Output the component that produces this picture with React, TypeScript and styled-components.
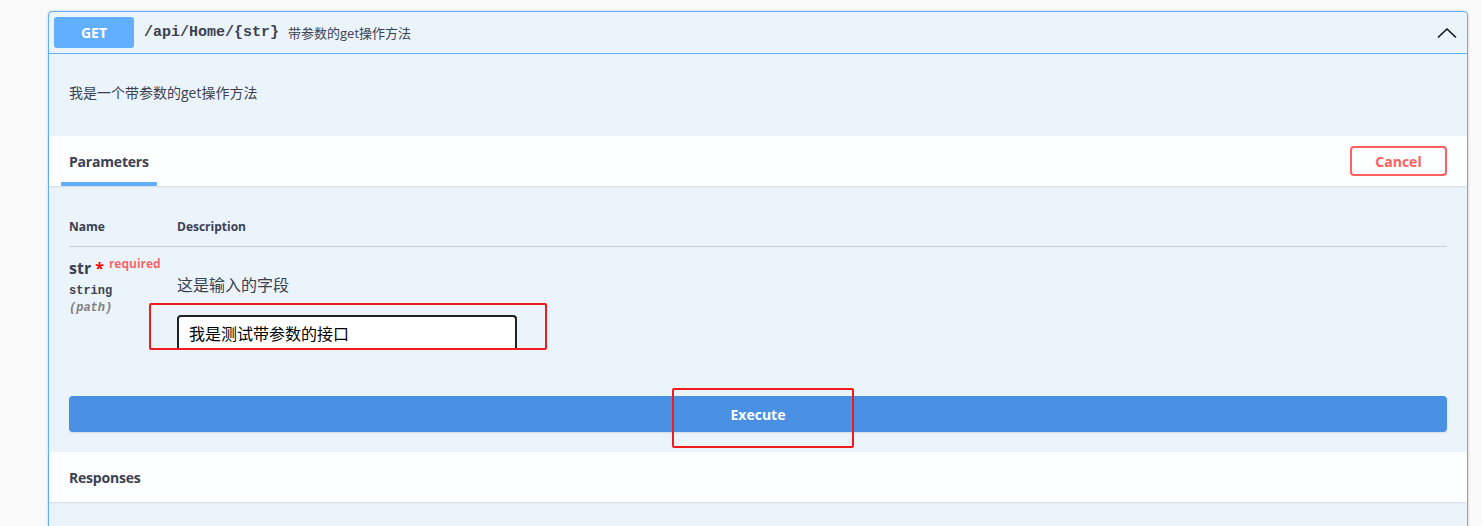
import React from "react";
import styled, { createGlobalStyle } from "styled-components";

const SANS = `"Open Sans", "Noto Sans CJK SC", sans-serif`;
const MONO = `"Liberation Mono", "Noto Sans CJK SC", monospace`;

const GlobalStyle = createGlobalStyle`
  body {
    margin: 0;
    background: #fafafa;
    font-family: ${SANS};
    color: #3b4151;
  }
`;

const Page = styled.div`
  padding: 11px 0 0 48px;
  height: 515px;
  overflow: hidden;
`;

const Card = styled.div`
  position: relative;
  width: 1418px;
  border: 1px solid #61affe;
  border-radius: 4px;
  background: #ebf3fb;
  box-shadow: 0 0 3px rgba(0, 0, 0, 0.19);
`;

const Summary = styled.div`
  display: flex;
  align-items: center;
  padding: 5px;
  border-bottom: 1px solid #61affe;
`;

const Method = styled.span`
  display: flex;
  align-items: center;
  justify-content: center;
  width: 80px;
  height: 31px;
  border-radius: 3px;
  background: #61affe;
  color: #fff;
  font-size: 14px;
  font-weight: 700;
`;

const Path = styled.span`
  margin-left: 10px;
  font-family: ${MONO};
  font-size: 15px;
  font-weight: 700;
  color: #3b4151;
`;

const SummaryText = styled.span`
  flex: 1;
  margin-left: 9px;
  font-size: 13px;
  color: #3b4151;
`;

const Chevron = styled.svg`
  width: 20px;
  height: 20px;
  margin-right: 5px;
`;

const Description = styled.div`
  padding: 28px 20px 32px;
  font-size: 14px;
  line-height: 22px;
`;

const SectionHeader = styled.div`
  display: flex;
  align-items: center;
  justify-content: space-between;
  height: 50px;
  padding: 0 20px 0 12px;
  background: rgba(255, 255, 255, 0.85);
  box-shadow: 0 1px 2px rgba(0, 0, 0, 0.1);
`;

const Tab = styled.div<{ $active?: boolean }>`
  display: flex;
  align-items: center;
  align-self: stretch;
  padding: 4px 8px 0;
  font-size: 14px;
  font-weight: 700;
  letter-spacing: -0.2px;
  color: #3b4151;
  border-bottom: 4px solid ${(p) => (p.$active ? "#61affe" : "transparent")};
`;

const CancelButton = styled.button`
  width: 97px;
  height: 30px;
  border: 2px solid #ff6060;
  border-radius: 4px;
  background: transparent;
  color: #ff6060;
  font-family: ${SANS};
  font-size: 14px;
  font-weight: 700;
`;

const ParamsBody = styled.div`
  padding: 20px 20px 27px;
`;

const TableHead = styled.div`
  display: grid;
  grid-template-columns: 108px 1fr;
  align-items: center;
  height: 40px;
  border-bottom: 1px solid rgba(59, 65, 81, 0.2);
  font-size: 12px;
  font-weight: 700;
`;

const ParamRow = styled.div`
  display: grid;
  grid-template-columns: 108px 1fr;
`;

const NameCell = styled.div`
  padding-top: 10px;
`;

const ParamName = styled.div`
  font-size: 16px;
  font-weight: 700;
  line-height: 22px;
`;

const Star = styled.span`
  color: red;
  margin-left: 4px;
`;

const Required = styled.span`
  display: inline-block;
  vertical-align: top;
  position: relative;
  top: -1px;
  margin-left: 5px;
  font-size: 12px;
  line-height: 16px;
  color: rgba(255, 0, 0, 0.6);
`;

const ParamType = styled.div`
  margin-top: 3px;
  font-family: ${MONO};
  font-size: 12px;
  font-weight: 700;
  line-height: 18px;
`;

const ParamIn = styled.div`
  font-family: ${MONO};
  font-size: 12px;
  font-style: italic;
  font-weight: 700;
  line-height: 16px;
  color: gray;
`;

const DescCell = styled.div`
  padding-top: 26px;
`;

const DescText = styled.div`
  font-size: 16px;
  line-height: 24px;
`;

const ValueInput = styled.input`
  display: block;
  box-sizing: border-box;
  width: 340px;
  height: 34px;
  margin-top: 18px;
  padding: 0 10px;
  border: 2px solid #222;
  border-bottom: none;
  border-radius: 4px 4px 0 0;
  background: #fff;
  font-family: ${SANS};
  font-size: 16px;
  color: #000;
`;

const ExecuteWrapper = styled.div`
  padding: 20px;
`;

const ExecuteButton = styled.button`
  width: 100%;
  height: 36px;
  border: none;
  border-radius: 4px;
  background: #4990e2;
  color: #fff;
  font-family: ${SANS};
  font-size: 14px;
  font-weight: 700;
  box-shadow: 0 1px 2px rgba(0, 0, 0, 0.1);
`;

const Filler = styled.div`
  height: 60px;
`;

const Mark = styled.div<{ $left: number; $top: number; $w: number; $h: number }>`
  position: absolute;
  left: ${(p) => p.$left}px;
  top: ${(p) => p.$top}px;
  width: ${(p) => p.$w}px;
  height: ${(p) => p.$h}px;
  box-sizing: border-box;
  border: 2px solid #f21b1b;
  border-radius: 2px;
  pointer-events: none;
`;

export default function App() {
  return (
    <Page>
      <GlobalStyle />
      <Card>
        <Summary>
          <Method>GET</Method>
          <Path>/api/Home/&#123;str&#125;</Path>
          <SummaryText>带参数的get操作方法</SummaryText>
          <Chevron viewBox="0 0 20 20">
            <polyline points="1,14.5 10,6 19,14.5" fill="none" stroke="#111" strokeWidth="1.6" />
          </Chevron>
        </Summary>

        <Description>我是一个带参数的get操作方法</Description>

        <SectionHeader>
          <Tab $active>Parameters</Tab>
          <CancelButton>Cancel</CancelButton>
        </SectionHeader>

        <ParamsBody>
          <TableHead>
            <span>Name</span>
            <span>Description</span>
          </TableHead>
          <ParamRow>
            <NameCell>
              <ParamName>
                str<Star>*</Star>
                <Required>required</Required>
              </ParamName>
              <ParamType>string</ParamType>
              <ParamIn>(path)</ParamIn>
            </NameCell>
            <DescCell>
              <DescText>这是输入的字段</DescText>
              <ValueInput defaultValue="我是测试带参数的接口" />
            </DescCell>
          </ParamRow>
        </ParamsBody>

        <ExecuteWrapper>
          <ExecuteButton>Execute</ExecuteButton>
        </ExecuteWrapper>

        <SectionHeader>
          <Tab>Responses</Tab>
        </SectionHeader>
        <Filler />

        <Mark $left={100} $top={291} $w={398} $h={47} />
        <Mark $left={623} $top={376} $w={182} $h={60} />
      </Card>
    </Page>
  );
}
